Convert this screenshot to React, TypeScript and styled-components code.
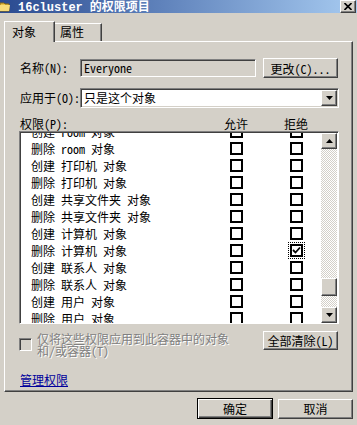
import React from "react";
import styled, { createGlobalStyle, css } from "styled-components";

const FONT = `"Noto Sans Mono CJK SC", "Noto Sans CJK SC", "DejaVu Sans Mono", monospace`;

const GlobalStyle = createGlobalStyle`
  html, body { margin: 0; padding: 0; background: #d4d0c8; }
  body { font-family: ${FONT}; font-size: 12px; color: #000; }
  * { box-sizing: border-box; }
`;

const raised = css`
  border: 1px solid;
  border-color: #fff #404040 #404040 #fff;
  box-shadow: inset -1px -1px 0 #808080;
  background: #d4d0c8;
`;

const sunken = css`
  border: 1px solid;
  border-color: #808080 #fff #fff #808080;
  box-shadow: inset 1px 1px 0 #404040, inset -1px -1px 0 #d4d0c8;
`;

const Window = styled.div`
  width: 357px;
  height: 425px;
  background: #d4d0c8;
  overflow: hidden;
  display: flex;
  flex-direction: column;
`;

const TitleBar = styled.div`
  height: 13px;
  display: flex;
  align-items: center;
  background: linear-gradient(to right, #2a4a90, #5f82bb 45%, #a6caf0);
`;

const TitleText = styled.span`
  margin-left: 7px;
  color: #fff;
  font-weight: bold;
  font-size: 12px;
  line-height: 13px;
  white-space: nowrap;
`;

const TitleLatin = styled.span`
  font-family: "Liberation Mono", monospace;
  font-weight: bold;
  margin-right: 7px;
`;

const CloseButton = styled.div`
  ${raised};
  margin-left: auto;
  margin-right: 1px;
  width: 16px;
  height: 13px;
  display: flex;
  align-items: center;
  justify-content: center;
`;

const TabStrip = styled.div`
  margin-top: 8px;
  padding-left: 4px;
  height: 20px;
  display: flex;
  align-items: flex-end;
  position: relative;
  z-index: 1;
`;

const Tab = styled.div<{ $active?: boolean }>`
  background: #d4d0c8;
  border-top: 1px solid #fff;
  border-right: 1px solid #404040;
  box-shadow: inset -1px 0 0 #808080;
  line-height: 16px;
  white-space: nowrap;
  ${(p) =>
    p.$active
      ? css`
          width: 51px;
          height: 21px;
          margin-bottom: -1px;
          border-left: 1px solid #fff;
          padding: 2px 0 0 7px;
        `
      : css`
          width: 47px;
          height: 18px;
          padding: 0 0 0 5px;
        `}
`;

const Panel = styled.div`
  margin: 0 4px;
  height: 351px;
  border: 1px solid;
  border-color: #fff #404040 #404040 #fff;
  box-shadow: inset -1px -1px 0 #808080;
  padding: 16px 13px 0 14px;
  display: flex;
  flex-direction: column;
`;

const FieldRow = styled.div<{ $gap?: number }>`
  display: flex;
  align-items: center;
  height: 20px;
  margin-top: ${(p) => p.$gap ?? 0}px;
`;

const Label = styled.span`
  width: 61px;
  padding-left: 1px;
  white-space: nowrap;
  line-height: 14px;
`;

const ReadOnlyInput = styled.div`
  ${sunken};
  width: 176px;
  height: 18px;
  background: #d4d0c8;
  padding: 0 0 0 3px;
  line-height: 16px;
`;

const PushButton = styled.button<{ $w: number; $h?: number; $default?: boolean }>`
  font: inherit;
  font-size: 12px;
  color: #000;
  padding: 0;
  width: ${(p) => p.$w}px;
  height: ${(p) => p.$h ?? 20}px;
  white-space: nowrap;
  ${(p) =>
    p.$default
      ? css`
          border: 1px solid #000;
          background: #d4d0c8;
          box-shadow: inset 1px 1px 0 #fff, inset -1px -1px 0 #404040, inset -2px -2px 0 #808080;
        `
      : raised};
`;

const RightButton = styled(PushButton)`
  margin-left: auto;
  margin-right: 1px;
`;

const Combo = styled.div`
  ${sunken};
  width: 259px;
  height: 20px;
  background: #fff;
  display: flex;
  align-items: center;
  padding: 1px 1px 1px 3px;
`;

const ComboText = styled.span`
  flex: 1;
  line-height: 16px;
`;

const ArrowButton = styled.div<{ $h?: number }>`
  ${raised};
  width: 16px;
  height: ${(p) => p.$h ?? 16}px;
  flex: none;
  display: flex;
  align-items: center;
  justify-content: center;
`;

const HeaderRow = styled.div`
  display: flex;
  align-items: flex-end;
  height: 13px;
  margin-top: 9px;
  line-height: 13px;
`;

const HeaderLabel = styled.span`
  width: 193px;
  padding-left: 1px;
`;

const ColHead = styled.span<{ $gap?: number }>`
  width: 48px;
  text-align: center;
  margin-left: ${(p) => p.$gap ?? 0}px;
`;

const ListBox = styled.div`
  margin-top: 1px;
  width: 320px;
  height: 193px;
  border: 1px solid;
  border-color: #808080 #fff #fff #808080;
  box-shadow: inset 1px 1px 0 #404040;
  padding: 1px 1px 0 1px;
  background: #fff;
  display: flex;
`;

const Rows = styled.div`
  flex: 1;
  overflow: hidden;
  background: #fff;
`;

const RowsInner = styled.div`
  margin-top: -10px;
`;

const Row = styled.div`
  height: 17px;
  display: grid;
  grid-template-columns: 209px 13px 47px 13px;
  align-items: center;
`;

const RowName = styled.span`
  padding-left: 10px;
  white-space: nowrap;
  line-height: 17px;
`;

const FlatCheck = styled.div<{ $focused?: boolean }>`
  width: 13px;
  height: 13px;
  border: 2px solid #000;
  background: #fff;
  display: flex;
  align-items: center;
  justify-content: center;
  ${(p) =>
    p.$focused &&
    css`
      outline: 1px dotted #000;
      outline-offset: 1px;
    `}
`;

const Spacer = styled.span``;

const ScrollBar = styled.div`
  width: 16px;
  display: flex;
  flex-direction: column;
  flex: none;
`;

const Track = styled.div`
  flex: 1;
  background-image: conic-gradient(#fff 25%, #d4d0c8 0 50%, #fff 0 75%, #d4d0c8 0);
  background-size: 2px 2px;
  display: flex;
  flex-direction: column;
`;

const Thumb = styled.div<{ $offset: number }>`
  ${raised};
  margin-top: ${(p) => p.$offset}px;
  height: 18px;
`;

const OptionsRow = styled.div`
  margin-top: 7px;
  display: flex;
  align-items: flex-start;
  height: 30px;
`;

const DisabledCheck = styled.div`
  ${sunken};
  width: 13px;
  height: 13px;
  background: #d4d0c8;
  margin-top: 7px;
  flex: none;
`;

const DisabledText = styled.span`
  margin-left: 5px;
  margin-top: 2px;
  width: 200px;
  line-height: 12px;
  color: #808080;
  text-shadow: 1px 1px 0 #fff;
`;

const Link = styled.a`
  margin-top: 12px;
  align-self: flex-start;
  color: #00009c;
  text-decoration: underline;
  line-height: 13px;
  padding-left: 1px;
  cursor: pointer;
`;

const Footer = styled.div`
  margin-top: 6px;
  display: flex;
  justify-content: flex-end;
  align-items: center;
  gap: 5px;
  padding-right: 4px;
`;

const Folder = () => (
  <svg width="11" height="13" viewBox="0 0 11 13">
    <path d="M0 3 H4 L5 4 H9 V11 H0 Z" fill="#e8c24a" stroke="#8a6a10" strokeWidth="1" />
    <path d="M0 5 H10 L9 11 H0 Z" fill="#f7dc7a" />
  </svg>
);

const CloseX = () => (
  <svg width="8" height="7" viewBox="0 0 8 7">
    <path d="M0.5 0 L7.5 7 M7.5 0 L0.5 7" stroke="#000" strokeWidth="1.6" />
  </svg>
);

const Tri = ({ up }: { up?: boolean }) => (
  <svg width="7" height="4" viewBox="0 0 7 4">
    <path d={up ? "M3.5 0 L7 4 L0 4 Z" : "M0 0 L7 0 L3.5 4 Z"} fill="#000" />
  </svg>
);

const Tick = () => (
  <svg width="9" height="9" viewBox="0 0 9 9">
    <path d="M1 4 L3.5 6.5 L8 1.5" stroke="#000" strokeWidth="1.8" fill="none" />
  </svg>
);

type Perm = { name: string; allow?: boolean; deny?: boolean; focus?: boolean };

const perms: Perm[] = [
  { name: "创建 room 对象" },
  { name: "删除 room 对象" },
  { name: "创建 打印机 对象" },
  { name: "删除 打印机 对象" },
  { name: "创建 共享文件夹 对象" },
  { name: "删除 共享文件夹 对象" },
  { name: "创建 计算机 对象" },
  { name: "删除 计算机 对象", deny: true, focus: true },
  { name: "创建 联系人 对象" },
  { name: "删除 联系人 对象" },
  { name: "创建 用户 对象" },
  { name: "删除 用户 对象" },
];

export default function App() {
  return (
    <>
      <GlobalStyle />
      <Window>
        <TitleBar>
          <Folder />
          <TitleText>
            <TitleLatin>16cluster</TitleLatin>的权限项目
          </TitleText>
          <CloseButton>
            <CloseX />
          </CloseButton>
        </TitleBar>
        <TabStrip>
          <Tab $active>对象</Tab>
          <Tab>属性</Tab>
        </TabStrip>
        <Panel>
          <FieldRow>
            <Label>名称(N):</Label>
            <ReadOnlyInput>Everyone</ReadOnlyInput>
            <RightButton $w={75}>更改(C)...</RightButton>
          </FieldRow>
          <FieldRow $gap={10}>
            <Label>应用于(O):</Label>
            <Combo>
              <ComboText>只是这个对象</ComboText>
              <ArrowButton>
                <Tri />
              </ArrowButton>
            </Combo>
          </FieldRow>
          <HeaderRow>
            <HeaderLabel>权限(P):</HeaderLabel>
            <ColHead>允许</ColHead>
            <ColHead $gap={12}>拒绝</ColHead>
          </HeaderRow>
          <ListBox>
            <Rows>
              <RowsInner>
                {perms.map((p) => (
                  <Row key={p.name}>
                    <RowName>{p.name}</RowName>
                    <FlatCheck>{p.allow && <Tick />}</FlatCheck>
                    <Spacer />
                    <FlatCheck $focused={p.focus}>{p.deny && <Tick />}</FlatCheck>
                  </Row>
                ))}
              </RowsInner>
            </Rows>
            <ScrollBar>
              <ArrowButton>
                <Tri up />
              </ArrowButton>
              <Track>
                <Thumb $offset={129} />
              </Track>
              <ArrowButton>
                <Tri />
              </ArrowButton>
            </ScrollBar>
          </ListBox>
          <OptionsRow>
            <DisabledCheck />
            <DisabledText>仅将这些权限应用到此容器中的对象和/或容器(T)</DisabledText>
            <RightButton $w={75} $h={19}>
              全部清除(L)
            </RightButton>
          </OptionsRow>
          <Link>管理权限</Link>
        </Panel>
        <Footer>
          <PushButton $w={76} $h={21} $default>
            确定
          </PushButton>
          <PushButton $w={75}>取消</PushButton>
        </Footer>
      </Window>
    </>
  );
}
